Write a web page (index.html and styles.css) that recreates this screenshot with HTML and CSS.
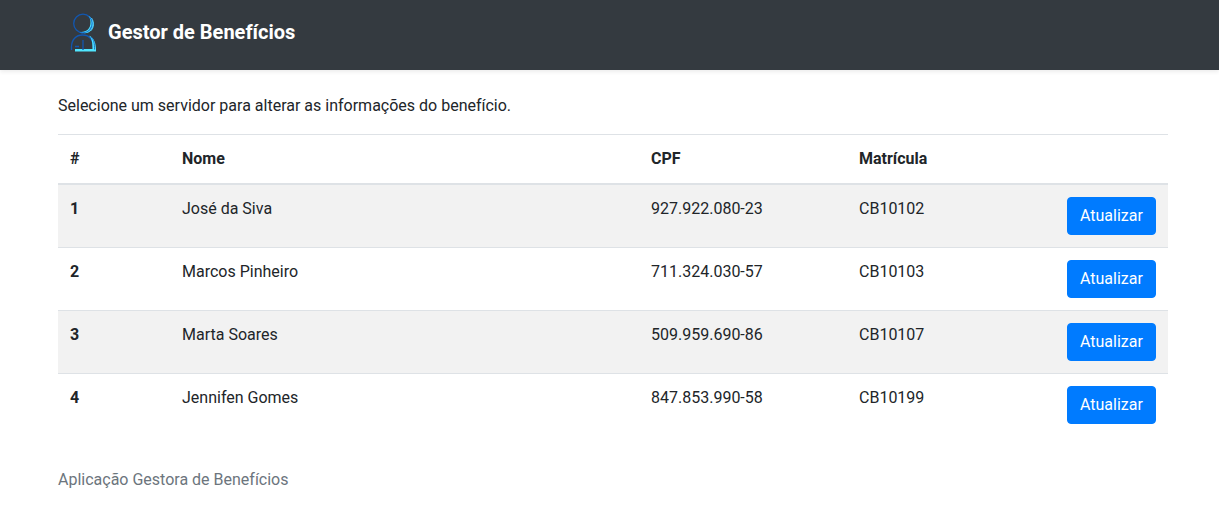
FILE: index.html
```html
<!DOCTYPE html>
<html lang="pt-BR">
<head>
<meta charset="utf-8">
<meta name="viewport" content="width=device-width, initial-scale=1">
<title>Gestor de Benefícios</title>
<link rel="stylesheet" href="styles.css">
</head>
<body>
<header class="navbar">
  <a class="brand" href="#">
    <svg class="brand-icon" viewBox="0 1 50 50" fill="none" aria-hidden="true">
      <circle cx="23" cy="17.500" r="9.300" stroke="#1257b0" stroke-width="1.300"/>
      <path d="M28.500 10C34.500 13 35 21 30.500 25C27.500 28 23 27.500 20 26C26.500 26.500 30.500 22.500 30.500 16.500C30.500 13.500 30 11.500 28.500 10Z" fill="#50e6ff"/>
      <path d="M29.500 11C33 14 33 20 30 23.500C28 26 24.500 27 21 26.700" stroke="#1976d2" stroke-width="1.200"/>
      <path d="M31.500 12C34.500 16 34 22 30.500 25" stroke="#50c8f5"/>
      <path d="M11.500 44V41C11.500 33.500 16 29 22.500 29S33.500 33.500 33.500 43" stroke="#1257b0" stroke-width="1.300"/>
      <path d="M29 29.500C34 32 36 36.500 36 44V45.500H15V43H32.500C32.500 36 32 33 29 29.500Z" fill="#50e6ff"/>
      <path d="M31 31C34 34 34.500 37 34.500 43.500" stroke="#1976d2"/>
      <path d="M23 34V44M15 40.500H19" stroke="#1257b0" stroke-width="1.300"/>
    </svg>
    <span>Gestor de Benefícios</span>
  </a>
</header>
<main class="container">
  <p class="intro">Selecione um servidor para alterar as informações do benefício.</p>
  <table class="table">
    <colgroup>
      <col class="col-id"><col><col class="col-data"><col class="col-data"><col class="col-action">
    </colgroup>
    <thead>
      <tr><th scope="col">#</th><th scope="col">Nome</th><th scope="col">CPF</th><th scope="col">Matrícula</th><td></td></tr>
    </thead>
    <tbody>
      <tr><th scope="row">1</th><td>José da Siva</td><td>927.922.080-23</td><td>CB10102</td><td><button class="btn" type="button">Atualizar</button></td></tr>
      <tr><th scope="row">2</th><td>Marcos Pinheiro</td><td>711.324.030-57</td><td>CB10103</td><td><button class="btn" type="button">Atualizar</button></td></tr>
      <tr><th scope="row">3</th><td>Marta Soares</td><td>509.959.690-86</td><td>CB10107</td><td><button class="btn" type="button">Atualizar</button></td></tr>
      <tr><th scope="row">4</th><td>Jennifen Gomes</td><td>847.853.990-58</td><td>CB10199</td><td><button class="btn" type="button">Atualizar</button></td></tr>
    </tbody>
  </table>
</main>
<footer class="footer">Aplicação Gestora de Benefícios</footer>
</body>
</html>
```
FILE: styles.css
```css
* { box-sizing: border-box; }
body {
  margin: 0;
  background: #fff;
  color: #212529;
  font: 16px/24px Roboto, "Liberation Sans", sans-serif;
}
.navbar {
  padding: 7px 60px 13px;
  background: #343a40;
  box-shadow: 0 2px 4px rgba(0, 0, 0, .075);
}
.brand {
  display: inline-flex;
  align-items: center;
  color: #fff;
  font-size: 20px;
  font-weight: 700;
  line-height: 30px;
  text-decoration: none;
  vertical-align: top;
}
.brand-icon { width: 50px; height: 50px; margin-right: -2px; }
.container { padding: 24px 51px 0 58px; }
.intro { margin: 0 0 16px; }
.table {
  width: 100%;
  table-layout: fixed;
  border-collapse: separate;
  border-spacing: 0;
}
.col-id { width: 112px; }
.col-data { width: 208px; }
.col-action { width: 113px; }
.table th, .table td {
  padding: 12px;
  border-top: 1px solid #dee2e6;
  text-align: left;
  vertical-align: top;
}
.table thead th, .table thead td { border-bottom: 2px solid #dee2e6; }
.table tbody tr:first-child > * { border-top: 0; }
.table tbody tr:nth-child(odd) { background: #f2f2f2; }
.btn {
  display: block;
  padding: 6px 12px;
  border: 1px solid #007bff;
  border-radius: 4px;
  background: #007bff;
  color: #fff;
  font: inherit;
  cursor: pointer;
}
.footer { padding: 32px 58px 16px; color: #6c757d; }
```
